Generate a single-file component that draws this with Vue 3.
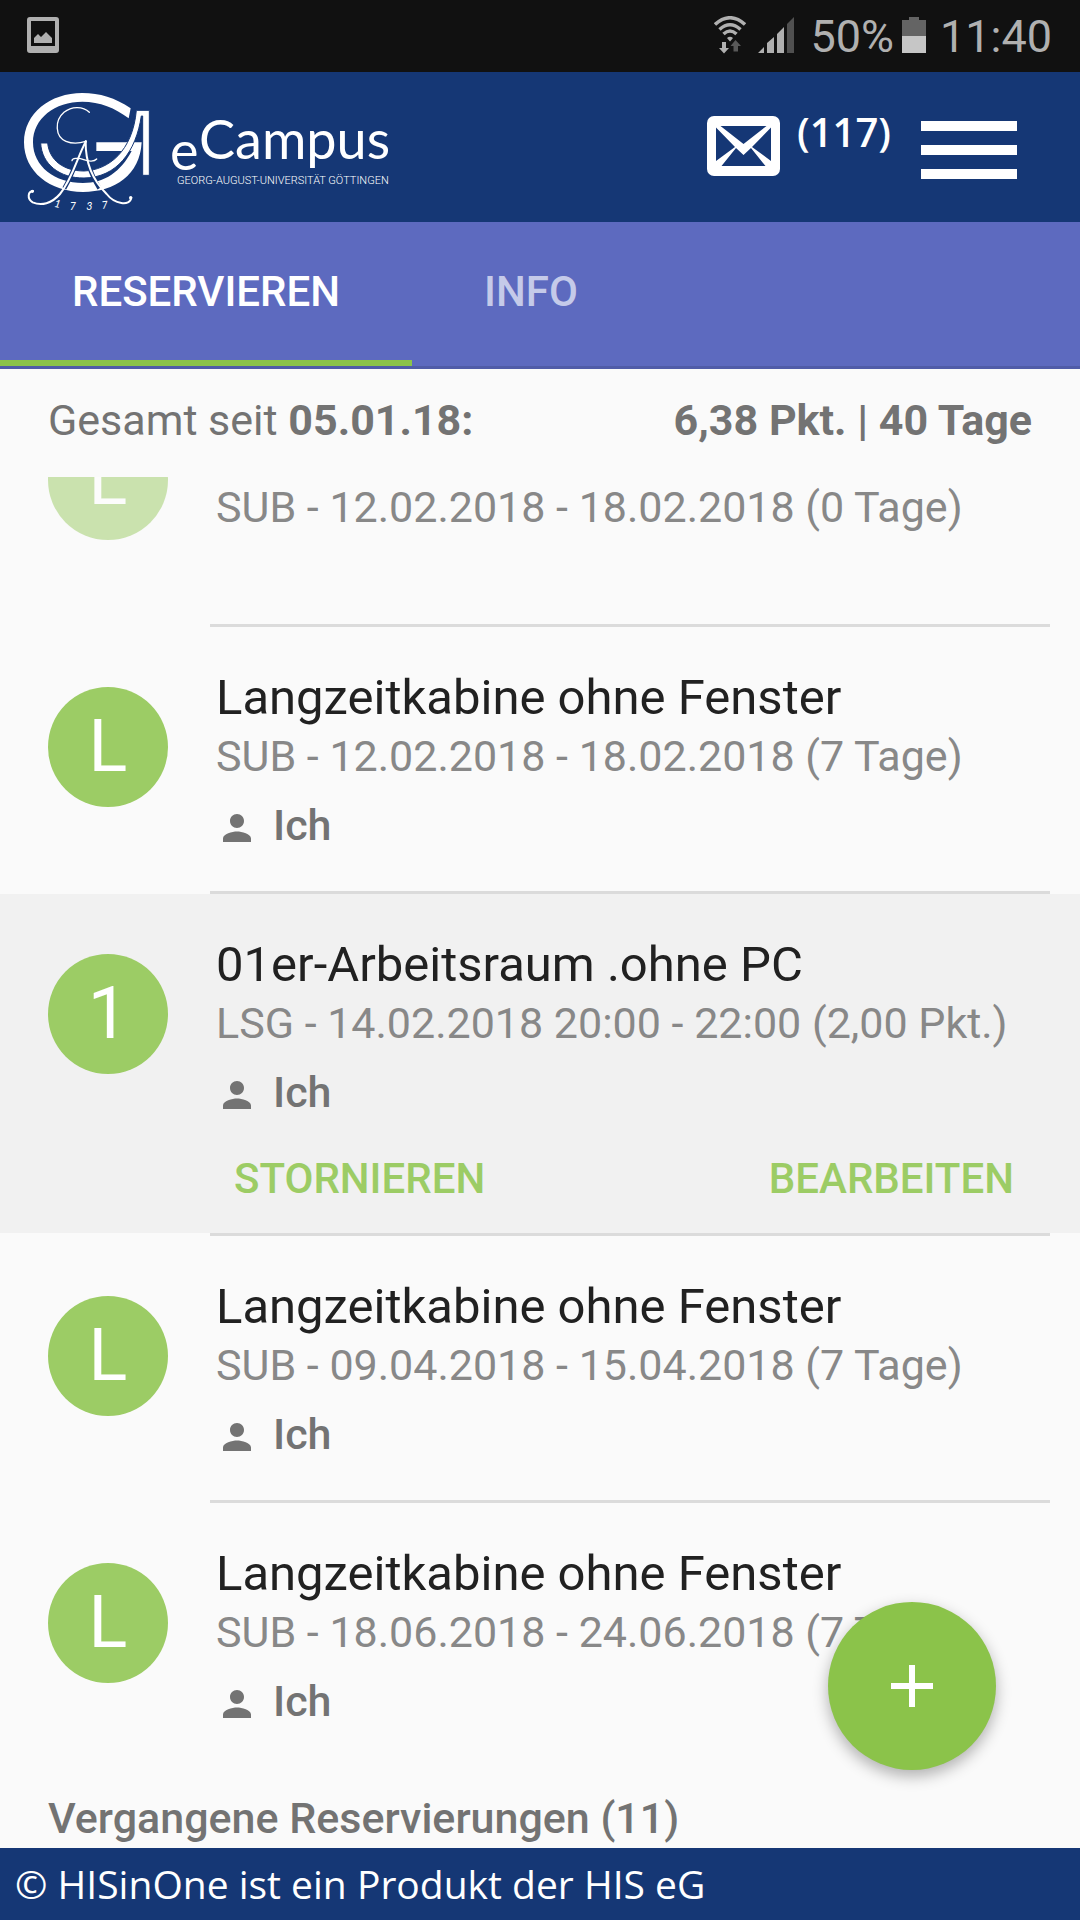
<script setup>
const reservations = [
  { id: 1, letter: 'L', detail: 'SUB - 12.02.2018 - 18.02.2018 (0 Tage)', cancelled: true },
  { id: 2, letter: 'L', title: 'Langzeitkabine ohne Fenster', detail: 'SUB - 12.02.2018 - 18.02.2018 (7 Tage)', person: 'Ich' },
  { id: 3, letter: '1', title: '01er-Arbeitsraum .ohne PC', detail: 'LSG - 14.02.2018 20:00 - 22:00 (2,00 Pkt.)', person: 'Ich', selected: true },
  { id: 4, letter: 'L', title: 'Langzeitkabine ohne Fenster', detail: 'SUB - 09.04.2018 - 15.04.2018 (7 Tage)', person: 'Ich' },
  { id: 5, letter: 'L', title: 'Langzeitkabine ohne Fenster', detail: 'SUB - 18.06.2018 - 24.06.2018 (7 Tage)', person: 'Ich' },
]
</script>

<template>
  <div class="app">
    <div class="status">
      <svg class="shot" width="32" height="36" viewBox="0 0 32 36">
        <path fill="#b0b0b0" fill-rule="evenodd" d="M3 0H29Q32 0 32 3V33Q32 36 29 36H3Q0 36 0 33V3Q0 0 3 0ZM4 4V29H28V4Z" />
        <path fill="#b0b0b0" d="M7 26V21L11 17L14 20L19 15L25 21V26Z" />
      </svg>
      <svg class="wifi" width="32" height="38" viewBox="0 0 32 38">
        <g fill="none" stroke="#b0b0b0" stroke-width="3.500">
          <path d="M1 8.500Q16-5 31 8.500" />
          <path d="M5.500 13.500Q16 4 26.500 13.500" />
          <path d="M9.500 18Q16 12 22.500 18" />
        </g>
        <path fill="#b0b0b0" d="M13 22Q16 19.500 19 22L16 25.500ZM8 26H12V32H15L10 37.500L5 32H8Z" />
        <path fill="#585858" d="M21.500 24L27 30H24V35.500H19.500V30H16.500Z" />
      </svg>
      <svg class="signal" width="36" height="36" viewBox="0 0 36 36">
        <path fill="#b0b0b0" d="M0 36L6 30V36ZM9 36V26L16 20V36ZM19 36V17L26 10V36Z" />
        <path fill="#505050" d="M29 36V7L36 0V36Z" />
      </svg>
      <span class="percent">50%</span>
      <svg class="battery" width="24" height="36" viewBox="0 0 24 36">
        <path fill="#646464" d="M7 0H17V3H24V20H0V3H7Z" />
        <path fill="#c6c6c6" d="M0 19H24V36H0Z" />
      </svg>
      <span class="time">11:40</span>
    </div>

    <header class="header">
      <svg class="logo" viewBox="0 0 400 140" width="400" height="140" role="img" aria-label="eCampus Georg-August-Universität Göttingen">
        <g transform="scale(.33333)">
          <path fill="#fff" d="M392 85C345 53 300 39 247 39C150 39 72 100 72 187C72 275 150 336 249 336C345 336 420 285 425 187H289V213H395C362 275 315 309 249 309C165 309 99 260 99 187C99 115 165 65 247 65C300 65 345 84 386 115Z" />
          <path fill="#fff" stroke="#153775" stroke-width="3" d="M122 189H143C148 240 190 273 252 273C325 270 398 215 409 91H448V286H428V108H424C408 215 350 293 252 294C180 295 125 253 122 189Z" />
          <g fill="none" stroke-linecap="round">
            <path stroke="#fff" stroke-width="4" d="M268 97C248 77 214 79 192 97C163 122 165 170 198 184C218 192 239 190 257 184" />
            <g stroke="#153775" stroke-width="13" stroke-linecap="butt">
              <path d="M240 220C226 257 210 297 193 325" />
              <path d="M259 215C263 250 277 292 298 325" />
            </g>
            <path stroke="#fff" stroke-width="6" d="M258 184C232 230 218 296 180 342C155 371 124 378 98 367C80 356 84 334 99 333" />
            <path stroke="#fff" stroke-width="6" d="M257 184C256 240 275 298 320 342C343 372 390 380 394 353" />
            <path stroke="#fff" stroke-width="4" d="M290 237C283 245 266 245 251 239C234 232 216 235 216 242" />
          </g>
          <circle cx="97" cy="334" r="5" fill="#fff" />
          <circle cx="392" cy="353" r="5" fill="#fff" />
          <g class="year" fill="#fff">
            <text x="163" y="382" transform="rotate(12 171 372)">1</text>
            <text x="209" y="390">7</text>
            <text x="259" y="390">3</text>
            <text x="305" y="386" transform="rotate(-6 313 374)">7</text>
          </g>
        </g>
        <g fill="#fff">
          <text class="brand" x="170" y="90">e</text>
          <text class="brand" x="199" y="79">Campus</text>
          <text class="uni" x="177" y="104">GEORG-AUGUST-UNIVERSITÄT GÖTTINGEN</text>
        </g>
      </svg>
      <a class="mail" href="#nachrichten" aria-label="117 Nachrichten">
        <svg width="73" height="60" viewBox="0 0 73 60">
          <rect width="73" height="60" rx="7" fill="#fff" />
          <path fill="#153775" d="M13.500 10H59.500L36.500 28ZM9 11.500L28 31L9 45ZM64 11.500L45 31L64 45ZM14.500 50L29 32L36.500 39L44 32L58.500 50Z" />
        </svg>
        <span>(117)</span>
      </a>
      <button class="menu" aria-label="Menü"><i></i><i></i><i></i></button>
    </header>

    <nav class="tabs">
      <button class="tab active">RESERVIEREN</button>
      <button class="tab">INFO</button>
    </nav>

    <div class="summary">
      <span>Gesamt seit <b>05.01.18:</b></span>
      <b>6,38 Pkt. | 40 Tage</b>
    </div>

    <main class="content">
      <ul class="list">
        <li v-for="r in reservations" :key="r.id" class="item" :class="{ selected: r.selected, cancelled: r.cancelled }">
          <div class="row">
            <span class="avatar">{{ r.letter }}</span>
            <div class="text">
              <h3 v-if="r.title">{{ r.title }}</h3>
              <p class="detail">{{ r.detail }}</p>
              <p v-if="r.person" class="person">
                <svg width="42" height="42" viewBox="0 0 24 24"><path fill="currentColor" d="M12 12c2.210 0 4-1.790 4-4s-1.790-4-4-4-4 1.790-4 4 1.790 4 4 4zm0 2c-2.670 0-8 1.340-8 4v2h16v-2c0-2.660-5.330-4-8-4z" /></svg>
                <span>{{ r.person }}</span>
              </p>
            </div>
          </div>
          <div v-if="r.selected" class="actions">
            <button>STORNIEREN</button>
            <button>BEARBEITEN</button>
          </div>
        </li>
      </ul>
      <h2>Vergangene Reservierungen (11)</h2>
      <button class="fab" aria-label="Neue Reservierung">
        <svg width="72" height="72" viewBox="0 0 24 24"><path fill="#fff" d="M19 13h-6v6h-2v-6H5v-2h6V5h2v6h6v2z" /></svg>
      </button>
    </main>

    <footer class="footer">© HISinOne ist ein Produkt der HIS eG</footer>
  </div>
</template>

<style>
body {
  margin: 0;
  background: #fafafa;
}
</style>

<style scoped>
* {
  box-sizing: border-box;
}
.app {
  display: flex;
  flex-direction: column;
  height: 100vh;
  font-family: Roboto, sans-serif;
  font-size: 43px;
  line-height: 48px;
  color: #737373;
  background: #fafafa;
}
button {
  border: 0;
  padding: 0;
  background: none;
  font: inherit;
  color: inherit;
}
.status {
  flex: none;
  display: flex;
  align-items: center;
  height: 72px;
  padding: 0 28px 2px 27px;
  background: #111;
  color: #b0b0b0;
  font-size: 45px;
}
.status span {
  padding-top: 3px;
}
.shot {
  margin-right: auto;
}
.wifi {
  margin-right: 12px;
}
.signal {
  margin-right: 16px;
}
.percent {
  margin-right: 8px;
}
.battery {
  margin-right: 14px;
}
.header {
  flex: none;
  display: flex;
  align-items: flex-start;
  height: 150px;
  padding: 8px 60px 0 0;
  background: #153775;
  color: #fff;
}
.logo {
  margin-right: auto;
}
.year {
  font: italic 32px Lato, sans-serif;
}
.brand {
  font: 54px Lato, sans-serif;
}
.uni {
  font: 300 11px Roboto, sans-serif;
}
.mail {
  display: flex;
  gap: 17px;
  margin: 0 30px 0 0;
  color: #fff;
  text-decoration: none;
  font: 600 40px/48px "Open Sans", sans-serif;
}
.mail svg {
  margin-top: 36px;
}
.mail span {
  margin-top: 28px;
}
.menu {
  display: flex;
  flex-direction: column;
  gap: 14px;
  width: 99px;
  padding: 41px 3px 0 0;
}
.menu i {
  height: 10px;
  background: #fff;
}
.tabs {
  flex: none;
  display: flex;
  height: 147px;
  border-bottom: 3px solid #505ca8;
  background: #5d6abf;
}
.tab {
  padding: 2px 72px 0;
  border-bottom: 6px solid transparent;
  color: #c5cae9;
  font-size: 42px;
  font-weight: 500;
}
.tab.active {
  border-bottom-color: #8bc34a;
  color: #fff;
}
.summary {
  flex: none;
  display: flex;
  justify-content: space-between;
  height: 108px;
  padding: 27px 48px 0;
}
.content {
  flex: 1;
  min-height: 0;
  overflow: hidden;
  position: relative;
}
.list {
  margin: -117px 0 0;
  padding: 0;
  list-style: none;
}
.item {
  position: relative;
}
.item:not(:last-child) {
  margin-bottom: 3px;
}
.item:not(:last-child)::after {
  content: "";
  position: absolute;
  top: 100%;
  left: 210px;
  right: 30px;
  height: 3px;
  background: #dbdbdb;
}
.selected {
  background: #f1f1f1;
}
.row {
  display: flex;
  gap: 48px;
  height: 264px;
  padding: 41px 30px 0 48px;
}
.avatar {
  flex: none;
  width: 120px;
  height: 120px;
  margin-top: 19px;
  border-radius: 50%;
  background: #9ccc65;
  color: #fff;
  font-size: 72px;
  line-height: 120px;
  text-align: center;
}
.cancelled .avatar {
  opacity: 0.5;
}
.cancelled .text {
  padding-top: 78px;
}
.text {
  white-space: nowrap;
}
h3 {
  margin: 0;
  color: #212121;
  font-size: 49px;
  font-weight: 400;
  line-height: 60px;
}
.detail {
  margin: 0;
  color: #888;
  line-height: 56px;
}
.person {
  display: flex;
  align-items: center;
  gap: 15px;
  margin: 17px 0 0;
  font-weight: 500;
}
.person svg {
  margin-top: 5px;
}
.actions {
  display: flex;
  justify-content: space-between;
  height: 75px;
  padding: 0 66px 0 234px;
  color: #9ccc65;
  font-weight: 500;
}
.actions button {
  height: 42px;
  font-size: 42px;
  line-height: 42px;
}
h2 {
  margin: 0;
  padding: 27px 48px;
  font-size: 43px;
  font-weight: 500;
}
.fab {
  position: absolute;
  right: 84px;
  bottom: 78px;
  display: grid;
  place-items: center;
  width: 168px;
  height: 168px;
  border-radius: 50%;
  background: #8bc34a;
  box-shadow: 0 6px 15px rgba(0, 0, 0, 0.3);
}
.footer {
  flex: none;
  height: 72px;
  padding: 0 15px;
  background: #153775;
  color: #fff;
  font: 39px/72px "Open Sans", sans-serif;
}
</style>
